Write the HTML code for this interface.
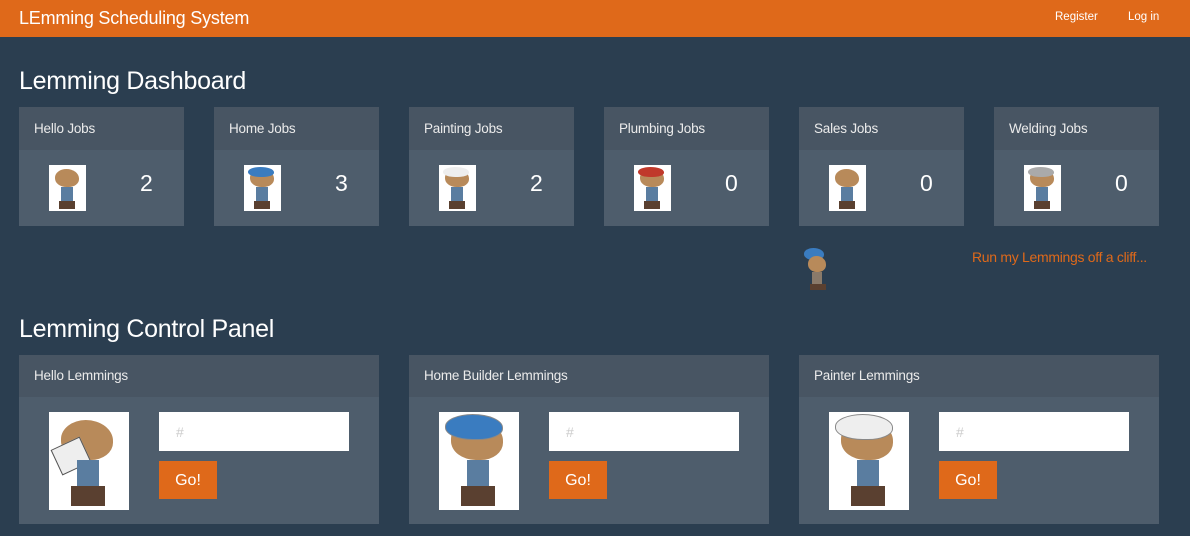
<!DOCTYPE html>
<html><head><style>
body{margin:0;width:1190px;height:536px;background:#2b3e50;font-family:"Liberation Sans",sans-serif;color:#ebebeb;position:relative;overflow:hidden}
.a{position:absolute}
.nav{left:0;top:0;width:1190px;height:37px;background:#df691a}
.ph{background:#485563}.pb{background:#4e5d6c}
.img{background:#fff;overflow:hidden}
.head{position:absolute;border-radius:50% 55% 45% 50%;background:#b88a5a}
.body{position:absolute;background:#5a7da0}
</style></head><body>
<div class="a nav"></div>
<div class="a" style="left:19px;top:8px;font-size:18px;color:#fff;letter-spacing:-0.2px">LEmming Scheduling System</div>
<div class="a" style="left:1055px;top:11px;font-size:11.5px;color:#fff">Register</div>
<div class="a" style="left:1128px;top:11px;font-size:11.5px;color:#fff">Log in</div>
<div class="a" style="left:19px;top:67px;font-size:25px;color:#fff;letter-spacing:-0.3px">Lemming Dashboard</div>

<div id="dash"></div>
<script>
var names=["Hello Jobs","Home Jobs","Painting Jobs","Plumbing Jobs","Sales Jobs","Welding Jobs"],nums=[2,3,2,0,0,0],hats=["none","#3a7cc0","#eee","#c0392b","none","#aaa"];
var h="";
for(var i=0;i<6;i++){var x=19+195*i;
h+='<div class="a ph" style="left:'+x+'px;top:107px;width:165px;height:43px"></div>';
h+='<div class="a" style="left:'+(x+15)+'px;top:121px;font-size:13.5px;letter-spacing:-0.2px">'+names[i]+'</div>';
h+='<div class="a pb" style="left:'+x+'px;top:150px;width:165px;height:76px"></div>';
h+='<div class="a img" style="left:'+(x+30)+'px;top:165px;width:37px;height:46px"><div class="head" style="left:6px;top:4px;width:24px;height:18px"></div>'+(hats[i]!="none"?'<div class="head" style="left:4px;top:2px;width:26px;height:10px;background:'+hats[i]+'"></div>':'')+'<div class="body" style="left:12px;top:22px;width:12px;height:14px"></div><div class="body" style="left:10px;top:36px;width:16px;height:8px;background:#5a4030"></div></div>';
h+='<div class="a" style="left:'+(x+121)+'px;top:170px;font-size:23px;color:#fff">'+nums[i]+'</div>';}
var cn=["Hello Lemmings","Home Builder Lemmings","Painter Lemmings"],ch=["none","#3a7cc0","#eee"];
for(var i=0;i<3;i++){var x=19+390*i;
h+='<div class="a ph" style="left:'+x+'px;top:355px;width:360px;height:42px"></div>';
h+='<div class="a" style="left:'+(x+15)+'px;top:368px;font-size:13.5px;letter-spacing:-0.2px">'+cn[i]+'</div>';
h+='<div class="a pb" style="left:'+x+'px;top:397px;width:360px;height:127px"></div>';
h+='<div class="a img" style="left:'+(x+30)+'px;top:412px;width:80px;height:98px"><div class="head" style="left:12px;top:8px;width:52px;height:40px"></div>'+(ch[i]!="none"?'<div class="head" style="left:6px;top:2px;width:56px;height:24px;background:'+ch[i]+';border:1px solid #888"></div>':'<div class="a" style="left:6px;top:30px;width:30px;height:26px;background:#eee;border:1px solid #555;transform:rotate(-25deg)"></div>')+'<div class="body" style="left:28px;top:48px;width:22px;height:26px"></div><div class="body" style="left:22px;top:74px;width:34px;height:20px;background:#5a4030"></div></div>';
h+='<div class="a" style="left:'+(x+140)+'px;top:412px;width:190px;height:39px;background:#fff"></div>';
h+='<div class="a" style="left:'+(x+157)+'px;top:424px;font-size:14px;color:#ccc">#</div>';
h+='<div class="a" style="left:'+(x+140)+'px;top:461px;width:58px;height:38px;background:#df691a;color:#fff;font-size:16px;text-align:center;line-height:40px">Go!</div>';}
document.getElementById("dash").innerHTML=h;
</script>
<div class="a" style="left:802px;top:246px;width:30px;height:46px">
<div class="head" style="left:2px;top:2px;width:20px;height:12px;background:#3a7cc0"></div>
<div class="head" style="left:6px;top:10px;width:18px;height:16px"></div>
<div class="body" style="left:10px;top:26px;width:10px;height:12px;background:#8a7a6a"></div>
<div class="body" style="left:8px;top:38px;width:16px;height:6px;background:#5a4030"></div></div>
<div class="a" style="left:972px;top:249px;font-size:14px;color:#df691a;letter-spacing:-0.3px">Run my Lemmings off a cliff...</div>
<div class="a" style="left:19px;top:315px;font-size:25px;color:#fff;letter-spacing:-0.3px">Lemming Control Panel</div>
</body></html>
